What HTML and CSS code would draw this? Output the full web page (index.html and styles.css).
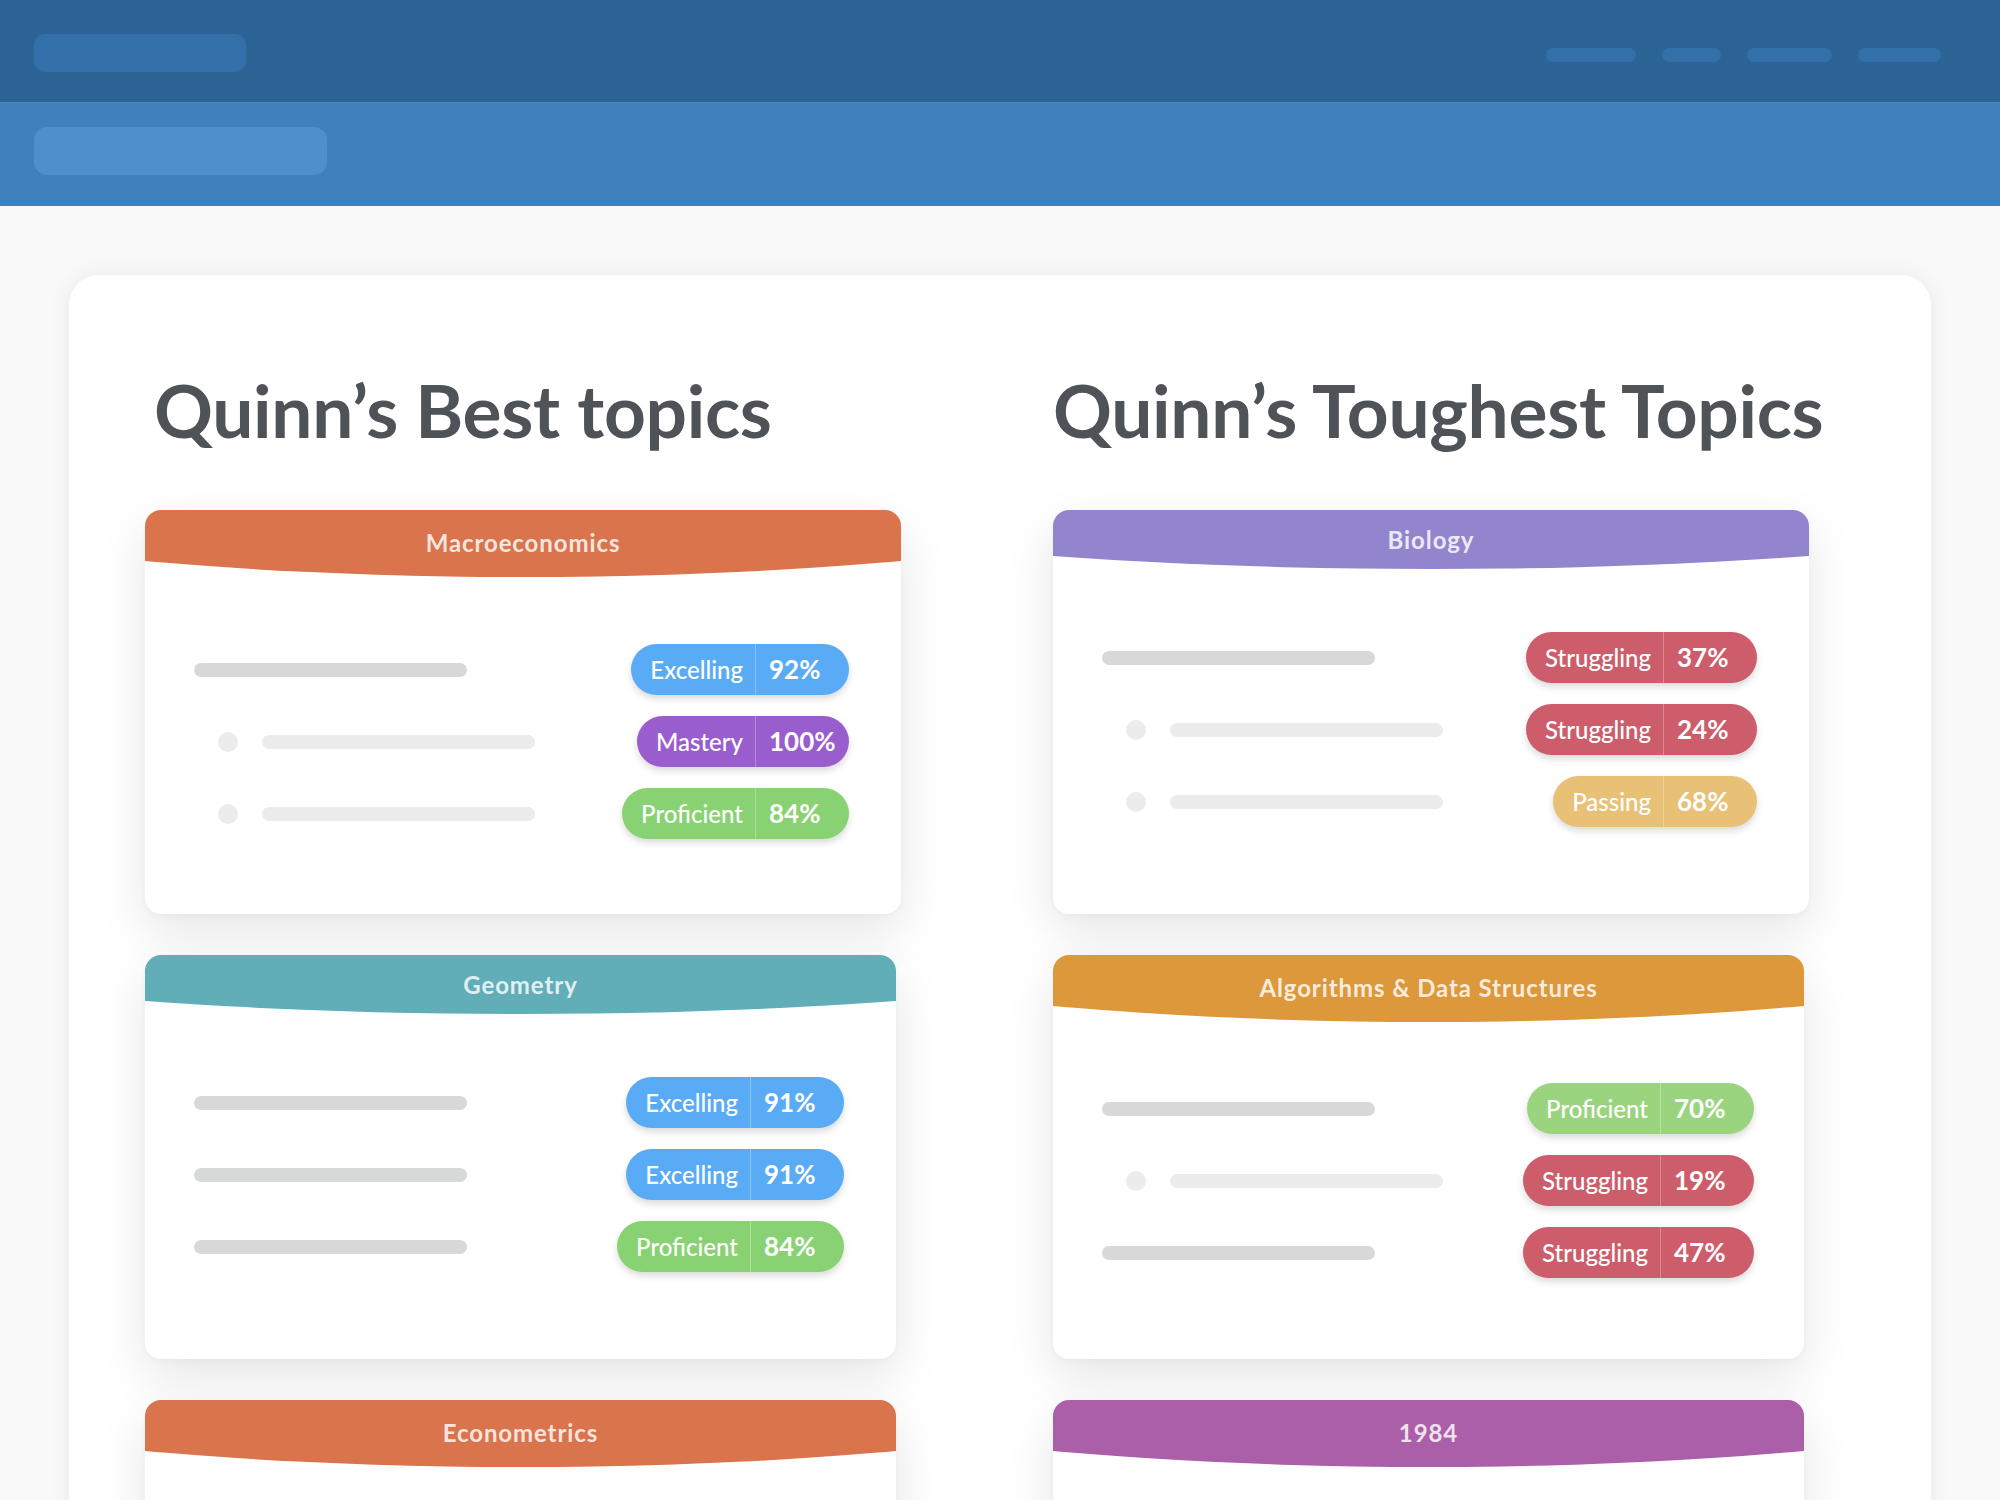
FILE: index.html
```html
<!DOCTYPE html>
<html lang="en">
<head>
<meta charset="utf-8">
<title>Quinn's Topics</title>
<link rel="stylesheet" href="styles.css">
</head>
<body>
<header class="topbar">
  <div class="logo-pill"></div>
  <nav class="nav">
    <span class="nav-link w90"></span>
    <span class="nav-link w59"></span>
    <span class="nav-link w85"></span>
    <span class="nav-link w83"></span>
  </nav>
</header>
<div class="subbar">
  <div class="sub-pill"></div>
</div>
<main class="page">
  <section class="sheet">
    <div class="column">
      <h1 class="title title-left">Quinn’s Best topics</h1>
      <div class="stack">
        <article class="topic">
          <div class="topic-head tall orange"><span>Macroeconomics</span></div>
          <div class="topic-body first">
            <div class="row"><div class="skel"><span class="bar"></span></div><div class="badge blue"><span class="label">Excelling</span><span class="value">92%</span></div></div>
            <div class="row"><div class="skel sub"><span class="dot"></span><span class="bar light"></span></div><div class="badge purple"><span class="label">Mastery</span><span class="value">100%</span></div></div>
            <div class="row"><div class="skel sub"><span class="dot"></span><span class="bar light"></span></div><div class="badge green"><span class="label">Proficient</span><span class="value">84%</span></div></div>
          </div>
        </article>
        <article class="topic narrow">
          <div class="topic-head short teal"><span>Geometry</span></div>
          <div class="topic-body">
            <div class="row"><div class="skel"><span class="bar"></span></div><div class="badge blue"><span class="label">Excelling</span><span class="value">91%</span></div></div>
            <div class="row"><div class="skel"><span class="bar"></span></div><div class="badge blue"><span class="label">Excelling</span><span class="value">91%</span></div></div>
            <div class="row"><div class="skel"><span class="bar"></span></div><div class="badge green"><span class="label">Proficient</span><span class="value">84%</span></div></div>
          </div>
        </article>
        <article class="topic narrow">
          <div class="topic-head tall orange"><span>Econometrics</span></div>
          <div class="topic-body"></div>
        </article>
      </div>
    </div>
    <div class="column">
      <h1 class="title">Quinn’s Toughest Topics</h1>
      <div class="stack">
        <article class="topic">
          <div class="topic-head short lavender"><span>Biology</span></div>
          <div class="topic-body">
            <div class="row"><div class="skel"><span class="bar"></span></div><div class="badge red"><span class="label">Struggling</span><span class="value">37%</span></div></div>
            <div class="row"><div class="skel sub"><span class="dot"></span><span class="bar light"></span></div><div class="badge red"><span class="label">Struggling</span><span class="value">24%</span></div></div>
            <div class="row"><div class="skel sub"><span class="dot"></span><span class="bar light"></span></div><div class="badge yellow"><span class="label">Passing</span><span class="value">68%</span></div></div>
          </div>
        </article>
        <article class="topic narrow">
          <div class="topic-head tall amber"><span>Algorithms &amp; Data Structures</span></div>
          <div class="topic-body tight">
            <div class="row"><div class="skel"><span class="bar"></span></div><div class="badge green light-green"><span class="label">Proficient</span><span class="value">70%</span></div></div>
            <div class="row"><div class="skel sub"><span class="dot"></span><span class="bar light"></span></div><div class="badge red"><span class="label">Struggling</span><span class="value">19%</span></div></div>
            <div class="row"><div class="skel"><span class="bar"></span></div><div class="badge red"><span class="label">Struggling</span><span class="value">47%</span></div></div>
          </div>
        </article>
        <article class="topic narrow">
          <div class="topic-head tall plum"><span>1984</span></div>
          <div class="topic-body"></div>
        </article>
      </div>
    </div>
  </section>
</main>
</body>
</html>
```
FILE: styles.css
```css
* { box-sizing: border-box; }

html, body {
  margin: 0;
  padding: 0;
}

body {
  background: #f9f9f9;
  font-family: Lato, "Open Sans", "Liberation Sans", sans-serif;
  color: #4f5357;
}

/* ---------- top navigation ---------- */
.topbar {
  height: 103px;
  background: #2c6395;
  display: flex;
  align-items: center;
  justify-content: space-between;
  padding: 3px 59px 0 34px;
  border-bottom: 1px solid #4b85bb;
}

.logo-pill {
  width: 212px;
  height: 38px;
  border-radius: 11px;
  background: #336fa8;
}

.nav {
  display: flex;
  gap: 26px;
  margin-top: 4px;
}

.nav-link {
  display: block;
  height: 14px;
  border-radius: 7px;
  background: #336fa8;
}
.w90 { width: 90px; }
.w59 { width: 59px; }
.w85 { width: 85px; }
.w83 { width: 83px; }

.subbar {
  height: 103px;
  background: #3f80bd;
  padding: 24px 34px 0;
}

.sub-pill {
  width: 293px;
  height: 48px;
  border-radius: 13px;
  background: #4f8fcc;
}

/* ---------- page ---------- */
.page {
  padding: 69px 69px 0;
}

.sheet {
  background: #ffffff;
  border-radius: 30px;
  box-shadow: 0 0 22px rgba(0, 0, 0, 0.07);
  padding: 90px 122px 60px 76px;
  display: grid;
  grid-template-columns: 756px 756px;
  column-gap: 152px;
}

.title {
  margin: 0 0 55px;
  font-size: 73px;
  line-height: 90px;
  font-weight: 700;
  color: #4f5357;
  letter-spacing: -0.3px;
  white-space: nowrap;
}

.title-left {
  padding-left: 9px;
}

.stack {
  display: flex;
  flex-direction: column;
  gap: 41px;
}

/* ---------- topic cards ---------- */
.topic {
  height: 404px;
  background: #ffffff;
  border-radius: 16px;
  overflow: hidden;
  box-shadow: 0 18px 50px rgba(0, 0, 0, 0.10), 0 2px 6px rgba(0, 0, 0, 0.03);
}

.topic.narrow {
  width: 751px;
}

.topic-head {
  display: flex;
  justify-content: center;
  font-size: 24px;
  line-height: 26px;
  font-weight: 700;
  letter-spacing: 0.9px;
  color: rgba(255, 255, 255, 0.84);
}

.topic-head.tall {
  height: 67px;
  padding-top: 20px;
  clip-path: ellipse(100% 120px at 50% calc(100% - 120px));
}

.topic-head.short {
  height: 59px;
  padding-top: 17px;
  clip-path: ellipse(100% 97px at 50% calc(100% - 97px));
}

.orange { background: #d9744c; }
.teal { background: #61aeb9; }
.lavender { background: #9285ce; }
.amber { background: #dc983b; }
.plum { background: #ab5fa8; }

.topic-body {
  padding: 63px 52px 0 49px;
  display: flex;
  flex-direction: column;
  gap: 21px;
}

.topic-body.first {
  padding-top: 67px;
}

.topic-body.tight {
  padding-top: 61px;
  padding-right: 50px;
}

.row {
  height: 51px;
  display: flex;
  align-items: center;
  justify-content: space-between;
}

.skel {
  display: flex;
  align-items: center;
}

.skel.sub {
  padding-left: 24px;
}

.bar {
  display: block;
  width: 273px;
  height: 14px;
  border-radius: 7px;
  background: #d7d9d9;
}

.bar.light {
  background: #ececec;
}

.dot {
  display: block;
  width: 20px;
  height: 20px;
  border-radius: 50%;
  background: #ececec;
  margin-right: 24px;
}

/* ---------- badges ---------- */
.badge {
  display: flex;
  align-items: center;
  height: 51px;
  border-radius: 26px;
  color: #ffffff;
  box-shadow: 0 4px 7px rgba(0, 0, 0, 0.14);
  font-size: 24px;
  line-height: 51px;
}

.badge .label {
  padding: 0 12px 0 19px;
  font-weight: 500;
}

.badge .value {
  width: 94px;
  padding-left: 13px;
  font-size: 26px;
  font-weight: 700;
  border-left: 1px solid rgba(255, 255, 255, 0.28);
}

.blue { background: #5aabf6; }
.purple { background: #995dcd; }
.green { background: #89d273; }
.green.light-green { background: #9bd47f; }
.red { background: #cd5d6a; }
.yellow { background: #e8c177; }
```
